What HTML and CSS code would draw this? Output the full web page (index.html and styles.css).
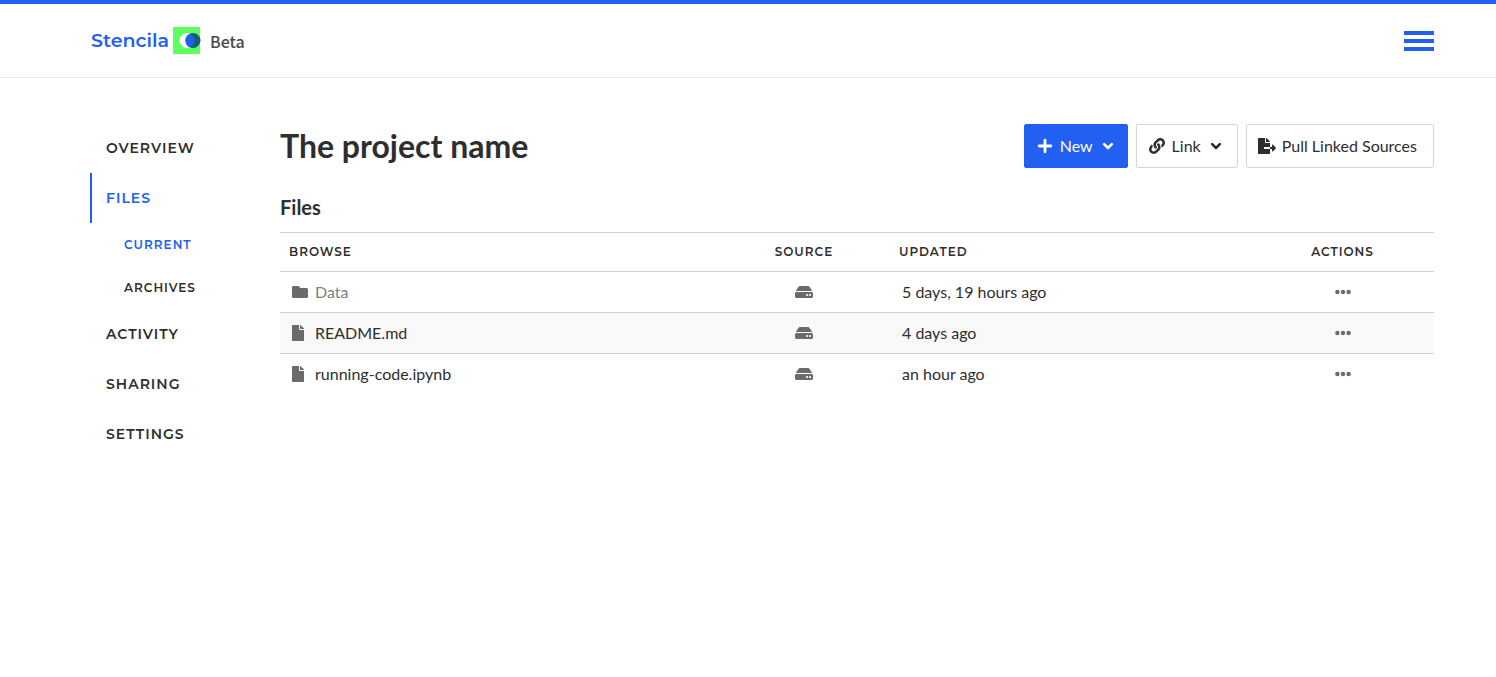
FILE: index.html
```html
<!DOCTYPE html>
<html lang="en">
<head>
<meta charset="utf-8">
<meta name="viewport" content="width=device-width, initial-scale=1">
<title>The project name - Files</title>
<link rel="stylesheet" href="styles.css">
</head>
<body>
<svg class="sprite" aria-hidden="true">
  <symbol id="file" viewBox="0 0 384 512"><path d="M224 136V0H24C10.700 0 0 10.700 0 24v464c0 13.300 10.700 24 24 24h336c13.300 0 24-10.700 24-24V160H248c-13.200 0-24-10.800-24-24zm160-14.100v6.100H256V0h6.100c6.400 0 12.500 2.500 17 7l97.900 98c4.500 4.500 7 10.600 7 16.900z"/></symbol>
  <symbol id="folder" viewBox="0 0 512 512"><path d="M464 128H272l-64-64H48C21.500 64 0 85.500 0 112v288c0 26.500 21.500 48 48 48h416c26.500 0 48-21.500 48-48V176c0-26.500-21.500-48-48-48z"/></symbol>
  <symbol id="drive" viewBox="0 0 576 512"><path d="M576 304v96c0 26.500-21.500 48-48 48H48c-26.500 0-48-21.500-48-48v-96c0-26.500 21.500-48 48-48h480c26.500 0 48 21.500 48 48zm-48-80a79.600 79.600 0 0 1 30.800 6.200L462.300 85.400A48 48 0 0 0 422.300 64H153.700a48 48 0 0 0-40 21.400L17.200 230.200A79.600 79.600 0 0 1 48 224h480zm-48 96c-17.700 0-32 14.300-32 32s14.300 32 32 32 32-14.300 32-32-14.300-32-32-32zm-96 0c-17.700 0-32 14.300-32 32s14.300 32 32 32 32-14.300 32-32-14.300-32-32-32z"/></symbol>
  <symbol id="dots" viewBox="0 0 16 16"><circle cx="2.400" cy="8" r="2.200"/><circle cx="8" cy="8" r="2.200"/><circle cx="13.600" cy="8" r="2.200"/></symbol>
  <symbol id="chevron" viewBox="0 0 12 12"><path d="M2.200 4.200 6 8l3.800-3.800" fill="none" stroke="currentColor" stroke-width="2.600" stroke-linecap="round" stroke-linejoin="round"/></symbol>
</svg>

<header class="topbar">
  <a class="brand" href="#" aria-label="Stencila Beta">
    <span class="brand-name">Stencila</span>
    <svg class="brand-mark" viewBox="0 0 28 27" aria-hidden="true">
      <path fill="#5eff5e" d="M0 0h27v27H0z"/>
      <circle cx="14" cy="13.500" r="7.500" fill="#fff"/>
      <circle cx="20" cy="13.500" r="7.500" fill="#15616a"/>
      <path fill="#2160f0" d="M17 6.630a7.500 7.500 0 0 1 0 13.740a7.500 7.500 0 0 1 0-13.740z"/>
    </svg>
    <span class="brand-stage">Beta</span>
  </a>
  <button class="burger" type="button" aria-label="Menu"><span></span><span></span><span></span></button>
</header>

<div class="page">
  <nav class="sidebar" aria-label="Project">
    <a href="#">Overview</a>
    <a class="active" href="#">Files</a>
    <a class="sub current" href="#">Current</a>
    <a class="sub" href="#">Archives</a>
    <a href="#">Activity</a>
    <a href="#">Sharing</a>
    <a href="#">Settings</a>
  </nav>

  <main class="content">
    <div class="title-row">
      <h1>The project name</h1>
      <div class="buttons">
        <button class="button primary" type="button">
          <svg class="icon16" viewBox="0 0 16 16" aria-hidden="true"><path d="M8 2.200v11.600M2.200 8h11.600" fill="none" stroke="currentColor" stroke-width="2.800" stroke-linecap="round"/></svg>
          <span>New</span>
          <svg class="chevron" aria-hidden="true"><use href="#chevron"/></svg>
        </button>
        <button class="button" type="button">
          <svg class="icon16" viewBox="0 0 512 512" aria-hidden="true"><path d="M326.600 185.400c59.700 59.800 58.900 155.700.400 214.600l-.400.400-67.200 67.200c-59.300 59.300-155.700 59.300-215 0-59.300-59.300-59.300-155.700 0-215l37.100-37.100c9.800-9.800 26.800-3.300 27.300 10.600.600 17.700 3.800 35.500 9.700 52.700 2 5.800.600 12.300-3.800 16.600l-13.100 13.100c-28 28-28.900 73.700-1.200 102 28 28.600 74.100 28.700 102.300.500l67.200-67.200c28.200-28.200 28.100-73.800 0-101.800-3.700-3.700-7.400-6.600-10.300-8.600a16 16 0 0 1-6.900-12.600c-.400-10.600 3.300-21.500 11.700-29.800l21.100-21.100c5.500-5.500 14.200-6.200 20.600-1.700a152.500 152.500 0 0 1 20.500 17.200zM467.500 44.400c-59.300-59.300-155.700-59.300-215 0l-67.200 67.200-.400.400c-58.500 58.900-59.300 154.800.400 214.600a152.500 152.500 0 0 0 20.500 17.200c6.400 4.500 15.100 3.800 20.600-1.700l21.100-21.100c8.400-8.300 12.100-19.200 11.700-29.800a16 16 0 0 0-6.900-12.600c-2.900-2-6.600-4.900-10.300-8.600-28.100-28-28.200-73.600 0-101.800l67.200-67.200c28.200-28.200 74.300-28.100 102.300.500 27.700 28.300 26.800 74-1.200 102l-13.100 13.100c-4.400 4.300-5.800 10.800-3.800 16.600 5.900 17.200 9.100 35 9.700 52.700.500 13.900 17.500 20.400 27.300 10.600l37.100-37.100c59.300-59.300 59.300-155.700 0-215z"/></svg>
          <span>Link</span>
          <svg class="chevron" aria-hidden="true"><use href="#chevron"/></svg>
        </button>
        <button class="button wide" type="button">
          <svg class="icon18" viewBox="0 0 576 512" aria-hidden="true"><path d="M384 121.900c0-6.300-2.500-12.400-7-16.900L279.100 7c-4.500-4.500-10.600-7-17-7H256v128h128zM571 308l-95.700-96.400c-10.100-10.100-27.400-3-27.400 11.300V288h-64v64h64v65.200c0 14.300 17.300 21.400 27.400 11.300L571 332c6.600-6.600 6.600-17.400 0-24zm-379 28v-32c0-8.800 7.200-16 16-16h176V160H248c-13.200 0-24-10.800-24-24V0H24C10.700 0 0 10.700 0 24v464c0 13.300 10.700 24 24 24h336c13.300 0 24-10.700 24-24V352H208c-8.800 0-16-7.200-16-16z"/></svg>
          <span>Pull Linked Sources</span>
        </button>
      </div>
    </div>

    <h2>Files</h2>
    <table class="files">
      <thead>
        <tr><th class="name" scope="col">Browse</th><th class="source" scope="col">Source</th><th class="updated" scope="col">Updated</th><th class="actions" scope="col">Actions</th></tr>
      </thead>
      <tbody>
        <tr>
          <td><a class="entry folder" href="#"><svg class="icon16" aria-hidden="true"><use href="#folder"/></svg>Data</a></td>
          <td class="source"><svg class="icon18" role="img" aria-label="Uploaded"><use href="#drive"/></svg></td>
          <td class="updated">5 days, 19 hours ago</td>
          <td class="actions"><button class="more" type="button" aria-label="Actions for Data"><svg class="icon16" aria-hidden="true"><use href="#dots"/></svg></button></td>
        </tr>
        <tr>
          <td><a class="entry" href="#"><svg class="icon12" aria-hidden="true"><use href="#file"/></svg>README.md</a></td>
          <td class="source"><svg class="icon18" role="img" aria-label="Uploaded"><use href="#drive"/></svg></td>
          <td class="updated">4 days ago</td>
          <td class="actions"><button class="more" type="button" aria-label="Actions for README.md"><svg class="icon16" aria-hidden="true"><use href="#dots"/></svg></button></td>
        </tr>
        <tr>
          <td><a class="entry" href="#"><svg class="icon12" aria-hidden="true"><use href="#file"/></svg>running-code.ipynb</a></td>
          <td class="source"><svg class="icon18" role="img" aria-label="Uploaded"><use href="#drive"/></svg></td>
          <td class="updated">an hour ago</td>
          <td class="actions"><button class="more" type="button" aria-label="Actions for running-code.ipynb"><svg class="icon16" aria-hidden="true"><use href="#dots"/></svg></button></td>
        </tr>
      </tbody>
    </table>
  </main>
</div>
</body>
</html>
```
FILE: styles.css
```css
* { box-sizing: border-box; }

body {
  margin: 0;
  background: #fff;
  color: #2e2e2e;
  font: 16px/24px Lato, "Open Sans", sans-serif;
}

a { color: inherit; text-decoration: none; }
button { font: inherit; color: inherit; cursor: pointer; }
svg { fill: currentColor; flex: none; }
h1, h2 { margin: 0; font-weight: 700; }

.sprite { display: none; }
.icon12 { width: 12px; height: 16px; }
.icon16 { width: 16px; height: 16px; }
.icon18 { width: 18px; height: 16px; }
.chevron { width: 12px; height: 12px; margin-left: 2px; }

.topbar {
  display: flex;
  align-items: center;
  justify-content: space-between;
  height: 78px;
  padding: 0 62px 0 91px;
  border-top: 4px solid #2160f0;
  border-bottom: 1px solid #ebebeb;
}

.brand { display: flex; align-items: center; }
.brand-name {
  color: #2160f0;
  font: 600 19px/24px Montserrat, Lato, sans-serif;
}
.brand-mark { width: 28px; height: 27px; margin: 0 9px 0 4px; }
.brand-stage {
  color: #4a4a4a;
  font: 500 16px/22px "Source Sans Pro", "Noto Sans CJK SC", sans-serif;
}

.burger {
  display: flex;
  flex-direction: column;
  gap: 4px;
  width: 30px;
  padding: 0;
  border: 0;
  background: none;
}
.burger span { height: 4px; background: #2160f0; }

.page { display: flex; padding: 45px 62px 45px 90px; }

.sidebar {
  flex: none;
  width: 190px;
  font-family: Montserrat, Inter, sans-serif;
  font-size: 14px;
  font-weight: 600;
  letter-spacing: 1px;
  text-transform: uppercase;
}
.sidebar a { display: block; padding: 13px 14px; border-left: 2px solid transparent; }
.sidebar .active { border-color: #2160f0; color: #2160f0; }
.sidebar .sub { padding: 10px 32px 9px; font-size: 12px; }
.sidebar .current { color: #2160f0; }

.content { flex: 1; min-width: 0; padding-top: 1px; }

.title-row { display: flex; align-items: center; justify-content: space-between; }
h1 { font-size: 32px; line-height: 44px; }
h2 { margin: 27px 0 13px; font-size: 20px; line-height: 24px; }

.buttons { display: flex; gap: 8px; }
.button {
  display: flex;
  align-items: center;
  gap: 7px;
  height: 44px;
  padding: 0 15px 0 12px;
  border: 1px solid #d6d6d6;
  border-radius: 2px;
  background: #fff;
}
.primary { padding: 0 13px 0 12px; border-color: #2160f0; background: #2160f0; color: #fff; }
.wide { gap: 6px; padding: 0 16px 0 11px; }

.files { width: 100%; border-collapse: collapse; table-layout: fixed; }
.files tr { border-top: 1px solid #d0d0d0; }
.files tbody tr:nth-child(even) { background: #f9f9f9; }
.files th {
  height: 39px;
  padding: 0 9px;
  font: 600 12px/24px Montserrat, Inter, sans-serif;
  letter-spacing: 1px;
  text-align: left;
  text-transform: uppercase;
}
.files td { height: 41px; padding: 0 12px; }
th.source { width: 172px; }
th.updated { width: 361px; }
th.actions { width: 183px; }
.files .source, .files .actions { text-align: center; }
td.source svg { display: block; margin: 0 auto; color: #6b6b6b; }

.entry { display: flex; align-items: center; gap: 11px; }
.entry svg { color: #6b6b6b; }
.folder { gap: 7px; color: #808080; }
.more { display: block; margin: 0 auto; padding: 0; border: 0; background: none; color: #6b6b6b; }
.more svg { display: block; }
```
